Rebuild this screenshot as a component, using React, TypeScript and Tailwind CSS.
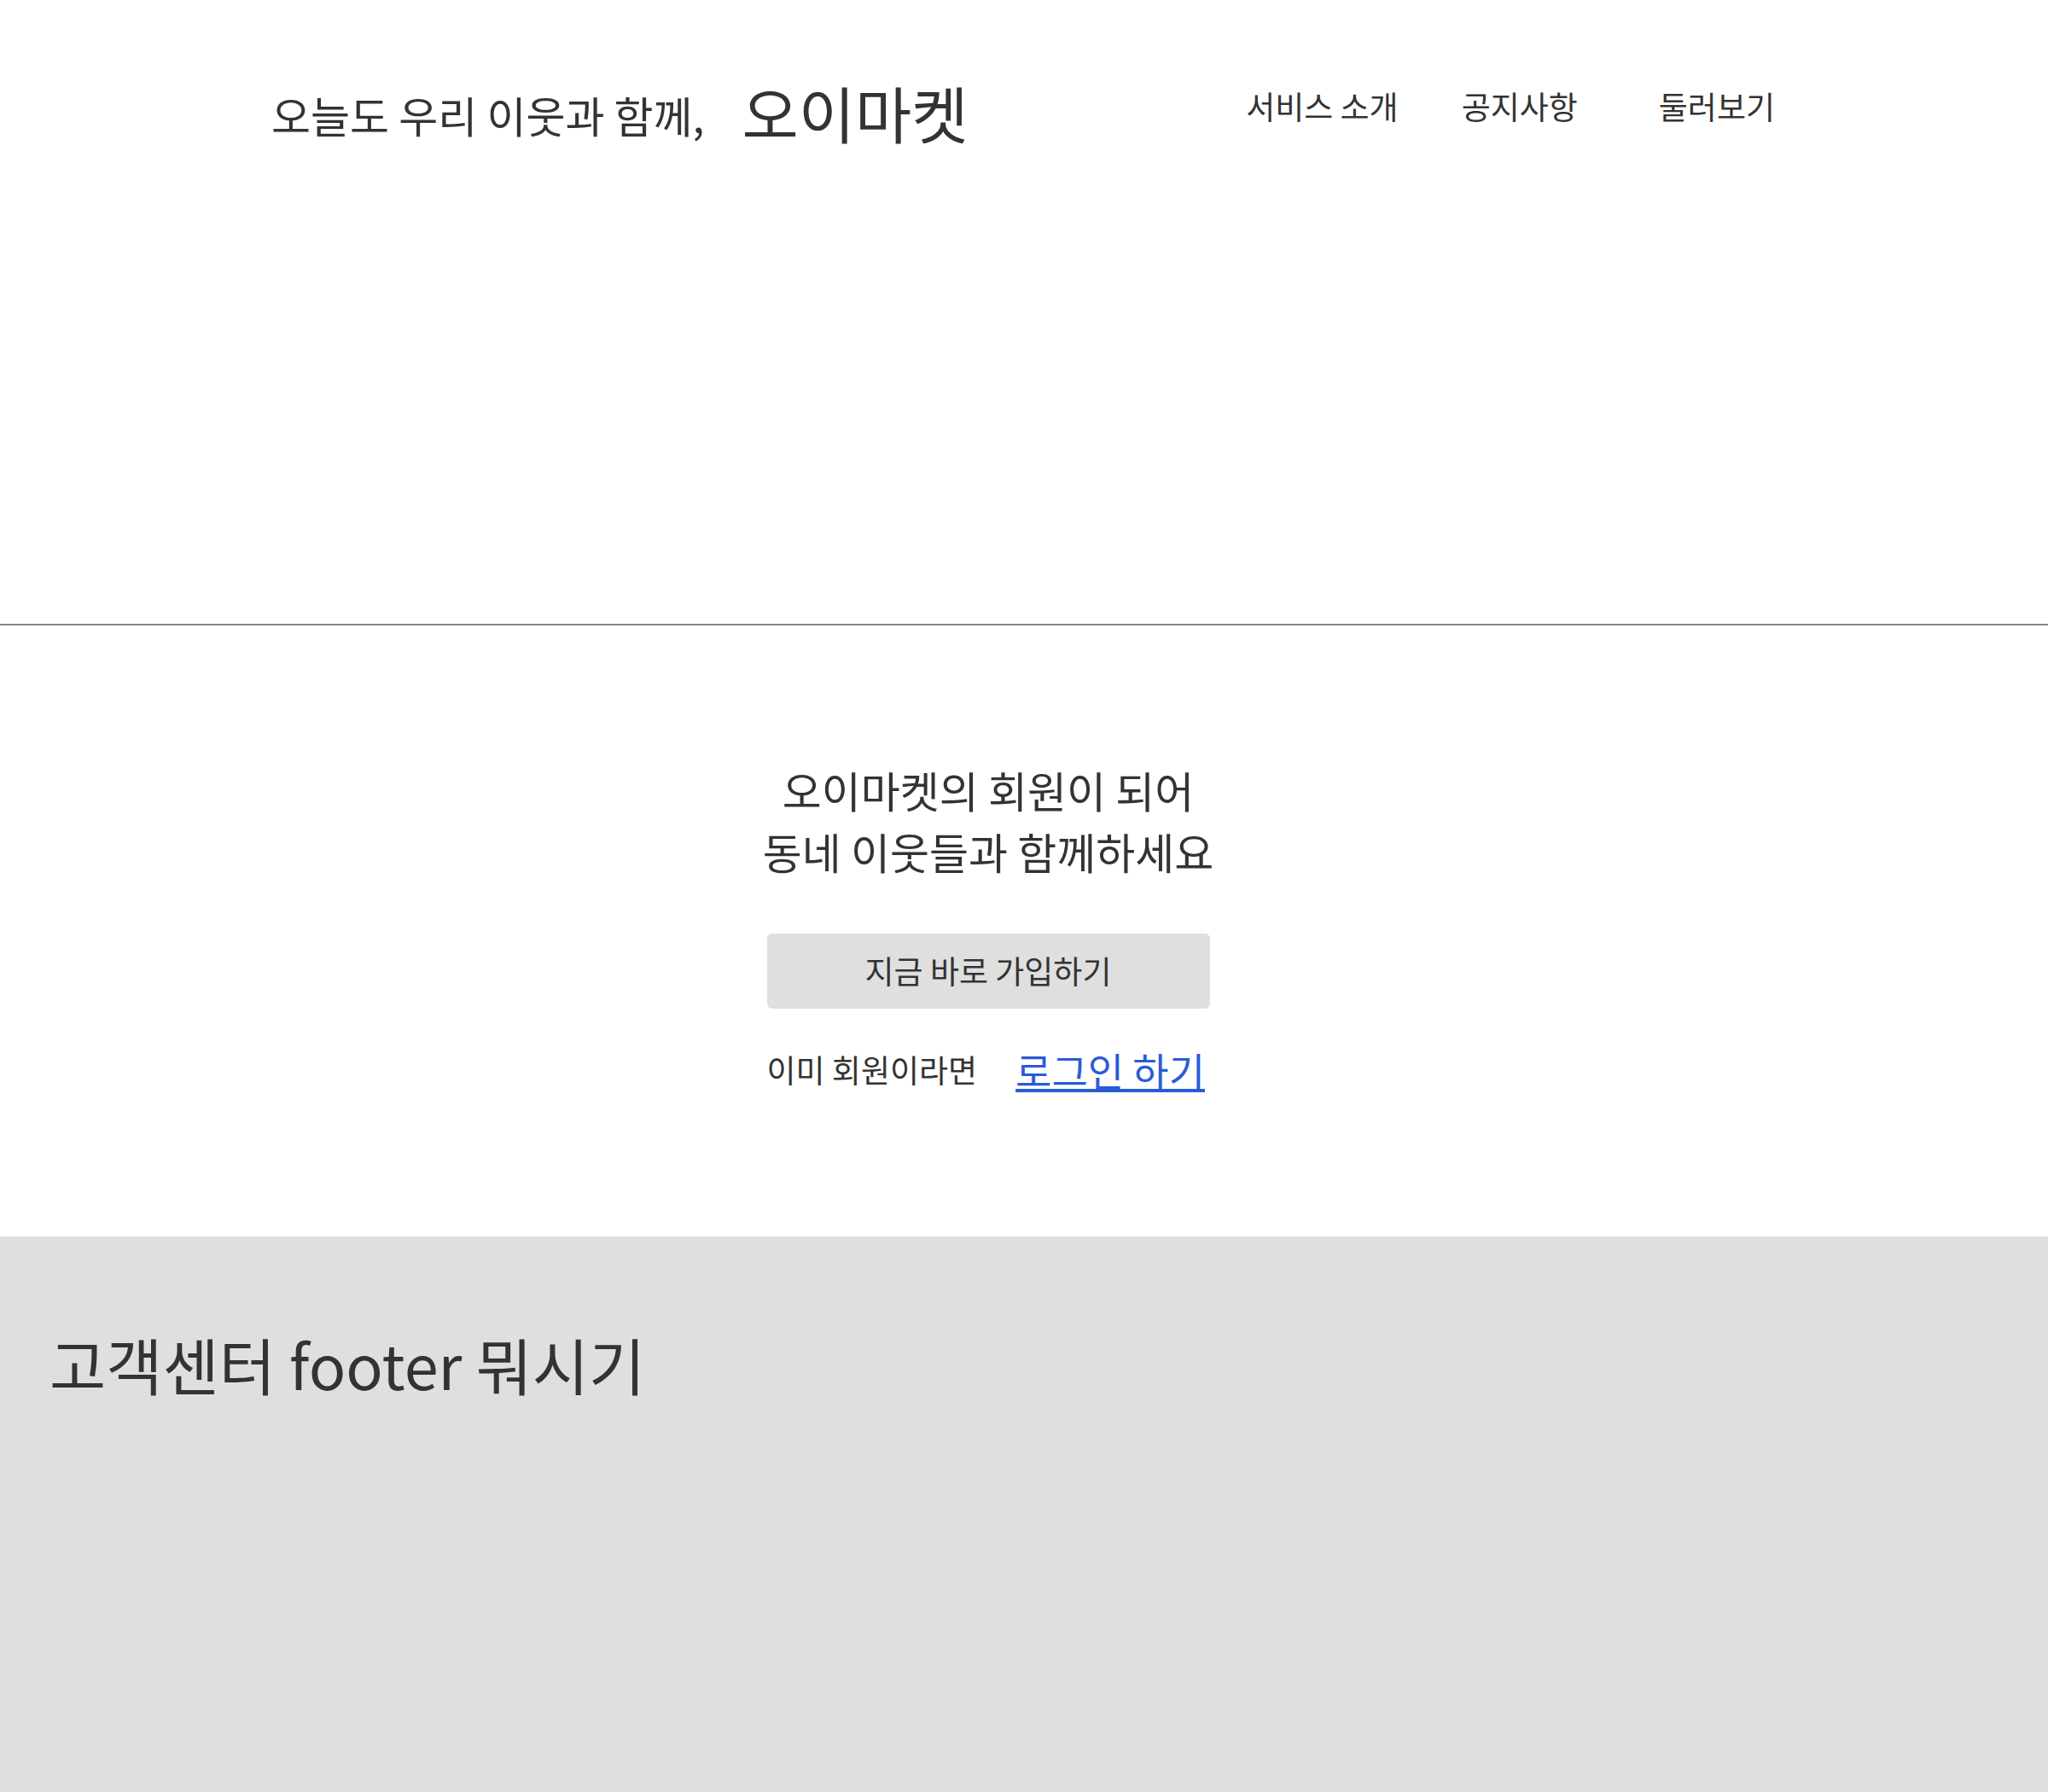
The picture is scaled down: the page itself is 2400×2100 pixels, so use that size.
const font = "font-['Noto_Sans_CJK_KR','Noto_Sans',sans-serif]";

function Header() {
  return (
    <header className="h-[731px]">
      <div className="flex items-start justify-between pl-[318px] pr-[320px]">
        <h1 className="flex items-start font-normal">
          <span className="mt-[109px] text-[50px] leading-none">오늘도 우리 이웃과 함께,</span>
          <span className="ml-[44px] mt-[95px] text-[72px] leading-none">오이마켓</span>
        </h1>
        <nav className="mt-[106px] flex text-[37px] leading-none">
          <a href="#">서비스 소개</a>
          <a href="#" className="ml-[74px]">공지사항</a>
          <a href="#" className="ml-[95px]">둘러보기</a>
        </nav>
      </div>
    </header>
  );
}

function JoinSection() {
  return (
    <section className="h-[716px] pr-[84px]">
      <div className="flex flex-col items-center pt-[156px]">
        <p className="text-center text-[50px] leading-[72px]">
          오이마켓의 회원이 되어
          <br />
          동네 이웃들과 함께하세요
        </p>
        <button
          type="button"
          className="mt-[61px] h-[88px] w-[519px] rounded-md bg-[#dfdfdf] text-[37px] text-[#333]"
        >
          지금 바로 가입하기
        </button>
        <div className="mt-[48px] flex w-[519px] items-center gap-[45px]">
          <span className="text-[37px] leading-none">이미 회원이라면</span>
          <a href="#" className="text-[46px] leading-none text-[#2a5bd7] underline">
            로그인 하기
          </a>
        </div>
      </div>
    </section>
  );
}

export default function App() {
  return (
    <div className={`${font} min-h-[2100px] bg-white text-[#333]`}>
      <Header />
      <hr className="h-[2px] border-0 bg-[#878787]" />
      <JoinSection />
      <footer className="h-[651px] bg-[#dfdfdf] pl-[58px] pt-[113px]">
        <p className="text-[72px] leading-none">고객센터 footer 뭐시기</p>
      </footer>
    </div>
  );
}
